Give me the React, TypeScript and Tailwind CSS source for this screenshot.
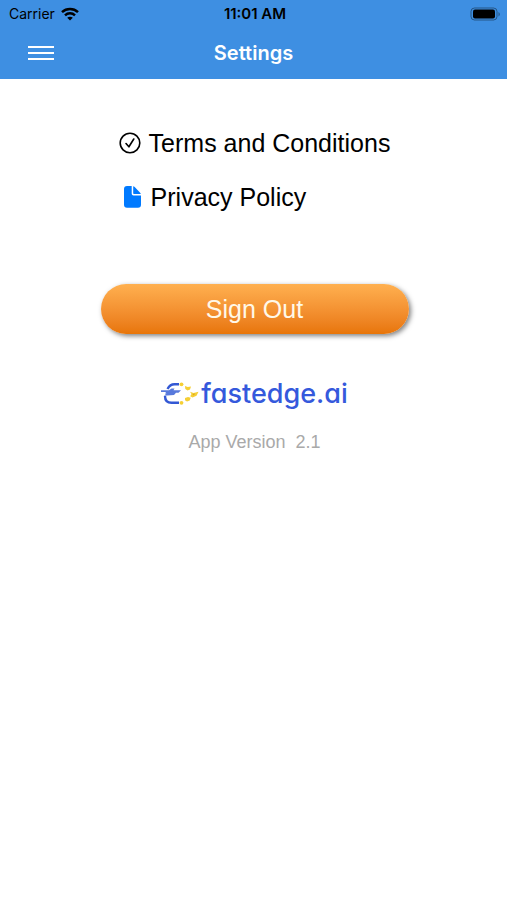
const StatusBar = () => (
    <div className="grid grid-cols-3 items-center h-7 pl-[9px] pr-1.5 text-black">
        <div className="flex items-center gap-1.5 text-[14px] leading-5">
            <span>Carrier</span>
            <svg className="w-[18px] h-[14px]" viewBox="0 0 18 14" fill="none" stroke="currentColor" strokeWidth="2.5" aria-hidden="true">
                <path d="M1 5.1C5.5 .9 12.5 .9 17 5.1" />
                <path d="M4 8.3C6.8 5.7 11.2 5.7 14 8.3" />
                <path d="M9 13.6L6.2 10.8C7.8 9.4 10.2 9.4 11.8 10.8Z" fill="currentColor" stroke="none" />
            </svg>
        </div>
        <div className="text-center text-[15px] leading-5 font-semibold whitespace-nowrap">11:01 AM</div>
        <svg className="w-[31px] h-[14px] justify-self-end" viewBox="0 0 31 14" aria-hidden="true">
            <rect x="1" y="1" width="26" height="12" rx="3.5" fill="none" stroke="#000" strokeOpacity=".4" />
            <rect x="3" y="2.5" width="22" height="9" rx="2" fill="#000" />
            <path d="M28.5 5v4.4c1.8-.8 1.8-3.6 0-4.4z" fill="#000" fillOpacity=".4" />
        </svg>
    </div>
);

const NavBar = () => (
    <div className="grid grid-cols-3 items-center h-[51px] px-7 pb-0.5">
        <button type="button" aria-label="Menu" className="justify-self-start text-white">
            <svg className="w-[26px] h-4" viewBox="0 0 26 16" stroke="currentColor" strokeWidth="1.8" aria-hidden="true">
                <path d="M0 2h26M0 8h26M0 14h26" />
            </svg>
        </button>
        <h1 className="text-center text-[20px] leading-6 font-semibold text-white">Settings</h1>
    </div>
);

const LogoMark = () => (
    <svg className="w-[38px] h-6" viewBox="0 0 38 24" fill="none" aria-hidden="true">
        <path d="M18 2.300h-4.500C10 2.300 8 4.200 6.500 7" stroke="#3358d4" strokeWidth="2.400" />
        <path d="M4 14C4 18.500 6.500 20.800 10.500 20.800H18" stroke="#3358d4" strokeWidth="2.400" />
        <path d="M0 8.300h8l2.500-1.800h3l-1 1.800H20l-2.500 2.500h-2.500l-2 2.200-10 .8 2.500-2.200H4l1-1.500H0z" fill="#5879dc" />
        <g fill="#f5cf35">
            <circle cx="20.500" cy="2.300" r="1.900" />
            <path d="M24 4l2.700 1 3.300-.5-1 3-2.500 1-2.200-1.500z" />
            <path d="M29 9.800l3.500 1.200 5-1.200-2 4-4 1.800-2.300-1.300 1.300-2.300z" />
            <path d="M24 16l3-1 2.700.7-1 2.800-2.700 1-2-1.200z" />
            <circle cx="20.500" cy="20.800" r="1.900" />
        </g>
        <path d="M31.500 12l2.500-.5-1.200 2z" fill="#dba51c" />
    </svg>
);

const CheckCircleIcon = () => (
    <svg className="w-[22px] h-[22px] shrink-0" viewBox="0 0 22 22" fill="none" stroke="currentColor" strokeWidth="1.6" strokeLinecap="round" strokeLinejoin="round" aria-hidden="true">
        <circle cx="11" cy="11" r="9.800" />
        <path d="M7 11.500l2.900 3.300L14.800 7" />
    </svg>
);

const DocumentIcon = () => (
    <svg className="w-6 h-6 shrink-0" viewBox="0 0 24 24" fill="#007aff" aria-hidden="true">
        <path d="M8 1h4.700v7.500c0 1.200.7 1.900 1.900 1.900H22v9.400c0 2-1 3-3 3H8c-2 0-3-1-3-3V4c0-2 1-3 3-3z" />
        <path d="M14.200 1.200c.6.100 1 .4 1.500.9l5.200 5.300c.5.500.8 1 .9 1.600h-6.900c-.5 0-.7-.2-.7-.7z" />
    </svg>
);

export default function App() {
    return (
        <div className="min-h-screen bg-white text-black font-['Liberation_Sans',sans-serif]">
            <header className="bg-[#3e8fe2] font-['Inter',sans-serif]">
                <StatusBar />
                <NavBar />
            </header>

            <main className="flex flex-col items-center pt-12 pl-0.5">
                <nav className="flex flex-col items-start gap-[22px] text-[25px] leading-8">
                    <a href="#terms" className="flex items-center gap-2">
                        <CheckCircleIcon />
                        Terms and Conditions
                    </a>
                    <a href="#privacy" className="flex items-center gap-2">
                        <DocumentIcon />
                        Privacy Policy
                    </a>
                </nav>

                <button
                    type="button"
                    className="mt-[71px] h-[50px] w-[308px] rounded-full bg-linear-to-b from-[#ffb04f] to-[#e87506] text-[25px] leading-8 text-[#fff8e8] shadow-[2px_2px_5px_rgba(0,0,0,0.5)]"
                >
                    Sign Out
                </button>

                {/* Brand */}
                <div className="mt-10 flex items-center gap-0.5 text-[#3559dc]">
                    <LogoMark />
                    <span className="font-['Inter',sans-serif] text-[27px] leading-10 font-medium [font-feature-settings:'cv11']">fastedge.ai</span>
                </div>
                <p className="mt-4 text-[18px] leading-6 whitespace-pre text-[#a9a9a9]">{'App Version  2.1'}</p>
            </main>
        </div>
    );
}
